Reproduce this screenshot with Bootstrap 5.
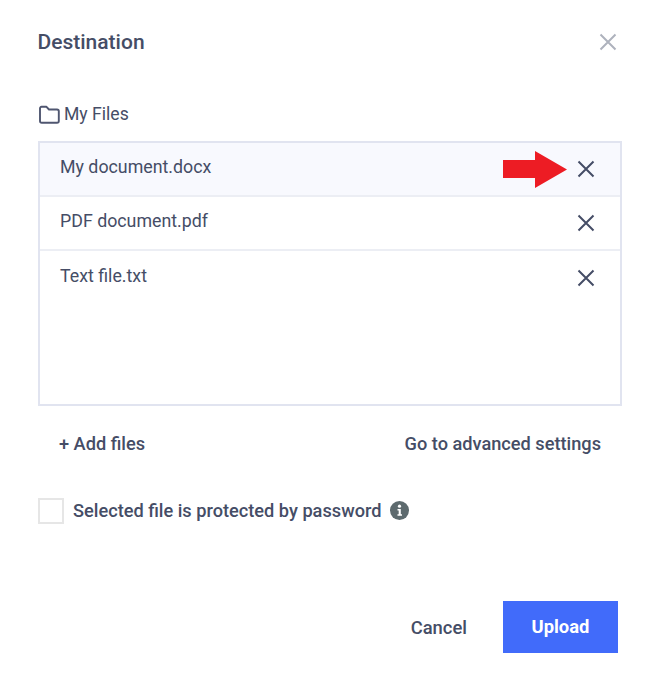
<!DOCTYPE html>
<html lang="en">
<head>
<meta charset="utf-8">
<title>Destination</title>
<link href="https://cdn.jsdelivr.net/npm/bootstrap@5.3.0/dist/css/bootstrap.min.css" rel="stylesheet">
<style>
body{font-family:Roboto,"Liberation Sans",sans-serif;color:#454d66;background:#fff;width:655px;height:677px;overflow:hidden}
.dlg{padding:28px 34px 0 38px;width:655px}
.dlg-head{height:28px;margin-bottom:46px;padding-right:4px}
.dlg-title{font-size:21px;font-weight:500;line-height:28px;margin:0;margin-left:-.5px;color:#454d66}
.path-row{height:24px;margin-bottom:15px;font-size:17.6px;gap:4px;line-height:24px}
.file-box{border:2px solid #e1e4f0;height:265px;width:584px;margin-right:-1px;border-radius:0}
.file-row{height:54px;padding:0 25px 0 20px;border:0;border-bottom:2px solid #eceef4;font-size:17.8px;color:#454d66;background:#fff}
.file-name{padding-bottom:3px}
.file-row.sel{background:#f8f9fe}
.icon-btn{background:none;border:0;padding:0;line-height:0}
.arrow{position:absolute;left:503px;top:151px}
.links{height:76px;padding:0 20px 0 21px;font-weight:500;font-size:18.2px}
.links a{color:#454d66;text-decoration:none}
.pw-row{height:27px;gap:9px;font-weight:500;font-size:18.2px;margin-top:15px}
.form-check-input.pw-box{width:26px;height:26px;border:2px solid #e6e6e6;border-radius:0;margin:0;background:#fff}
.foot{margin-top:77px;gap:36px;padding-right:3px}
.btn-cancel{font-weight:500;font-size:18.4px;color:#454d66;padding:2px 0 0;border:0}
.btn-up{width:115px;height:52px;background:#416bfa;border:0;border-radius:0;font-weight:700;font-size:18.4px;color:#fff;padding:0}
</style>
</head>
<body>
<div class="dlg position-relative">
  <div class="dlg-head d-flex justify-content-between align-items-center">
    <h5 class="dlg-title">Destination</h5>
    <button class="icon-btn" type="button" aria-label="Close">
      <svg width="18" height="18" viewBox="0 0 18 18"><path d="M1.5 1.5 16.5 16.5M16.5 1.5 1.5 16.5" stroke="#aeb2bd" stroke-width="2" fill="none"/></svg>
    </button>
  </div>
  <div class="path-row d-flex align-items-center">
    <svg width="22" height="19" viewBox="0 0 22 19"><path d="M2 3.5C2 2.5 2.6 1.8 3.5 1.8H8.5L11 4.5H19C20 4.5 20.8 5.2 20.8 6.2V16C20.8 17 20 17.8 19 17.8H3.8C2.8 17.8 2 17 2 16Z" stroke="#4f5670" stroke-width="1.9" fill="none" stroke-linejoin="round"/></svg>
    <span>My Files</span>
  </div>
  <div class="file-box list-group">
    <div class="file-row sel list-group-item d-flex justify-content-between align-items-center rounded-0">
      <span class="file-name">My document.docx</span>
      <button class="icon-btn" type="button" aria-label="Remove"><svg width="18" height="18" viewBox="0 0 18 18"><path d="M1.5 1.5 16.5 16.5M16.5 1.5 1.5 16.5" stroke="#454d66" stroke-width="2" fill="none"/></svg></button>
    </div>
    <div class="file-row list-group-item d-flex justify-content-between align-items-center rounded-0">
      <span class="file-name">PDF document.pdf</span>
      <button class="icon-btn" type="button" aria-label="Remove"><svg width="18" height="18" viewBox="0 0 18 18"><path d="M1.5 1.5 16.5 16.5M16.5 1.5 1.5 16.5" stroke="#454d66" stroke-width="2" fill="none"/></svg></button>
    </div>
    <div class="file-row list-group-item d-flex justify-content-between align-items-center rounded-0 border-0">
      <span class="file-name">Text file.txt</span>
      <button class="icon-btn" type="button" aria-label="Remove"><svg width="18" height="18" viewBox="0 0 18 18"><path d="M1.5 1.5 16.5 16.5M16.5 1.5 1.5 16.5" stroke="#454d66" stroke-width="2" fill="none"/></svg></button>
    </div>
  </div>
  <svg class="arrow" width="65" height="37" viewBox="0 0 65 37"><path d="M0 9H32V0L64 18.5 32 37V27H0Z" fill="#ed1c24"/></svg>
  <div class="links d-flex justify-content-between align-items-center">
    <a href="#">+ Add files</a>
    <a href="#">Go to advanced settings</a>
  </div>
  <div class="pw-row d-flex align-items-center">
    <input class="pw-box form-check-input" type="checkbox" aria-label="Protected">
    <span>Selected file is protected by password</span>
    <svg width="19" height="19" viewBox="0 0 19 19"><circle cx="9.5" cy="9.5" r="9.5" fill="#5d6a6e"/><circle cx="9.5" cy="5.2" r="1.6" fill="#fff"/><path d="M7.5 8H10.8V13.2H12V14.8H7.5V13.2H8.7V9.6H7.5Z" fill="#fff"/></svg>
  </div>
  <div class="foot d-flex justify-content-end align-items-center">
    <button class="btn btn-cancel" type="button">Cancel</button>
    <button class="btn btn-up" type="button">Upload</button>
  </div>
</div>
</body>
</html>
